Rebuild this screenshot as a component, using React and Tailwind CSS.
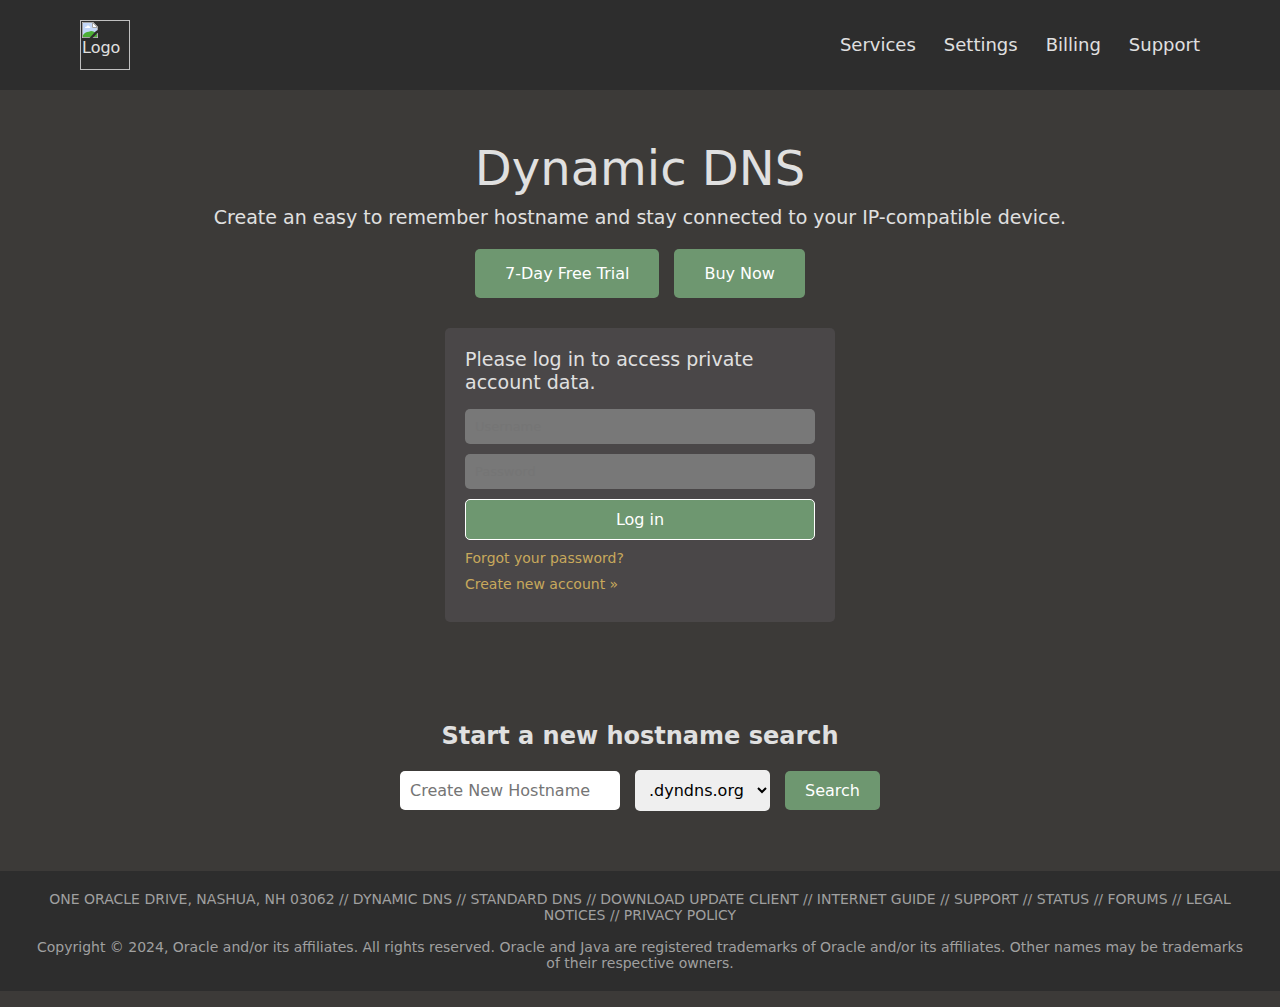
import React from "react";

const navItems = ["Services", "Settings", "Billing", "Support"];

function BrokenImageIcon() {
  return (
    <svg width="16" height="16" viewBox="0 0 16 16" className="block" aria-hidden="true">
      <path d="M0 0H11L16 5V16H0Z" fill="#fff" />
      <path d="M1 1H10V6H15V15H1Z" fill="#c3d7f8" />
      <path d="M3 6c0-1 1-1.500 1.500-1.200C5 3 7 3 7.500 4.500 8.500 4.500 8.500 6 8 6Z" fill="#fff" />
      <path d="M1 15v-2c2-2.500 4-3.500 6-3.300C9 8.500 12 9 15 12v3Z" fill="#4caf36" />
      <path d="M.5 15.500V.5H10.800L15.500 5.200V15.500Z" fill="none" stroke="#a5a5a5" />
      <path d="M10.500 .5V5.500H15.500Z" fill="#fff" stroke="#a5a5a5" />
      <path d="M16 8V10.500L10.500 16H7.500L14 9Z" fill="#2d2d2d" />
    </svg>
  );
}

function Header() {
  return (
    <header className="bg-[#2d2d2d] py-5">
      <div className="mx-auto flex w-[87.5%] items-center justify-between">
        <a href="#" className="block size-[50px] border border-[#c0c0c0] p-px">
          <BrokenImageIcon />
          <span className="block text-base leading-[19px]">Logo</span>
        </a>
        <nav className="flex gap-7 text-lg">
          {navItems.map((item) => (
            <a key={item} href="#">
              {item}
            </a>
          ))}
        </nav>
      </div>
    </header>
  );
}

function LoginForm() {
  const field =
    "h-[35px] w-full rounded-[5px] bg-[#787878] px-2.5 text-[13px] text-[#e0e0e0] placeholder:text-[#757575] placeholder:opacity-100";
  return (
    <form
      className="flex w-full max-w-[390px] flex-col gap-2.5 rounded-[5px] bg-[#4a4748] px-5 pt-5 pb-[30px] text-left"
      onSubmit={(e) => e.preventDefault()}
    >
      <h2 className="mb-[5px] text-[19px] leading-[23px]">Please log in to access private account data.</h2>
      <input type="text" aria-label="Username" placeholder="Username" className={field} />
      <input type="password" aria-label="Password" placeholder="Password" className={field} />
      <button type="submit" className="rounded-[5px] border border-white bg-[#6e9770] py-2.5 leading-[19px] text-white">
        Log in
      </button>
      <a href="#" className="text-sm leading-4 text-[#c8a95c]">
        Forgot your password?
      </a>
      <a href="#" className="text-sm leading-4 text-[#c8a95c]">
        Create new account »
      </a>
    </form>
  );
}

function HostnameSearch() {
  return (
    <section className="px-5 pt-[100px] pb-[60px]">
      <h2 className="text-center text-2xl leading-7 font-bold">Start a new hostname search</h2>
      <form
        className="mt-5 flex flex-wrap items-center justify-center gap-[15px]"
        onSubmit={(e) => e.preventDefault()}
      >
        <input
          type="text"
          aria-label="Create New Hostname"
          placeholder="Create New Hostname"
          className="h-[39px] w-[220px] rounded-[5px] bg-white px-2.5 text-black placeholder:text-[#757575] placeholder:opacity-100"
        />
        <select
          aria-label="Domain"
          className="h-[41px] rounded-[5px] bg-[#efefef] px-2.5 text-black"
        >
          <option>.dyndns.org</option>
        </select>
        <button type="submit" className="rounded-[5px] bg-[#6e9770] px-5 py-2.5 leading-[19px] text-white">
          Search
        </button>
      </form>
    </section>
  );
}

export default function App() {
  return (
    <div className="min-h-screen bg-[#3c3a38] font-['DejaVu_Sans',sans-serif] text-base text-[#e0e0e0]">
      <Header />
      <main>
        <section className="flex flex-col items-center px-5 pt-[50px] text-center">
          <h1 className="text-5xl leading-[56px]">Dynamic DNS</h1>
          <p className="mt-2.5 text-[19px] leading-[23px]">
            Create an easy to remember hostname and stay connected to your IP-compatible device.
          </p>
          <div className="mt-5 mb-[30px] flex flex-wrap justify-center gap-[15px]">
            <button type="button" className="rounded-[5px] bg-[#6e9770] px-[30px] py-[15px] leading-[19px] text-white">
              7-Day Free Trial
            </button>
            <button type="button" className="rounded-[5px] bg-[#6e9770] px-[30px] py-[15px] leading-[19px] text-white">
              Buy Now
            </button>
          </div>
          <LoginForm />
        </section>
        <HostnameSearch />
      </main>
      <footer className="flex flex-col gap-4 bg-[#2d2d2d] px-8 py-5 text-center text-sm leading-4 text-[#a0a0a0]">
        <p>
          ONE ORACLE DRIVE, NASHUA, NH 03062 // DYNAMIC DNS // STANDARD DNS // DOWNLOAD UPDATE CLIENT // INTERNET GUIDE
          // SUPPORT // STATUS // FORUMS // LEGAL NOTICES // PRIVACY POLICY
        </p>
        <p>
          Copyright © 2024, Oracle and/or its affiliates. All rights reserved. Oracle and Java are registered
          trademarks of Oracle and/or its affiliates. Other names may be trademarks of their respective owners.
        </p>
      </footer>
    </div>
  );
}
